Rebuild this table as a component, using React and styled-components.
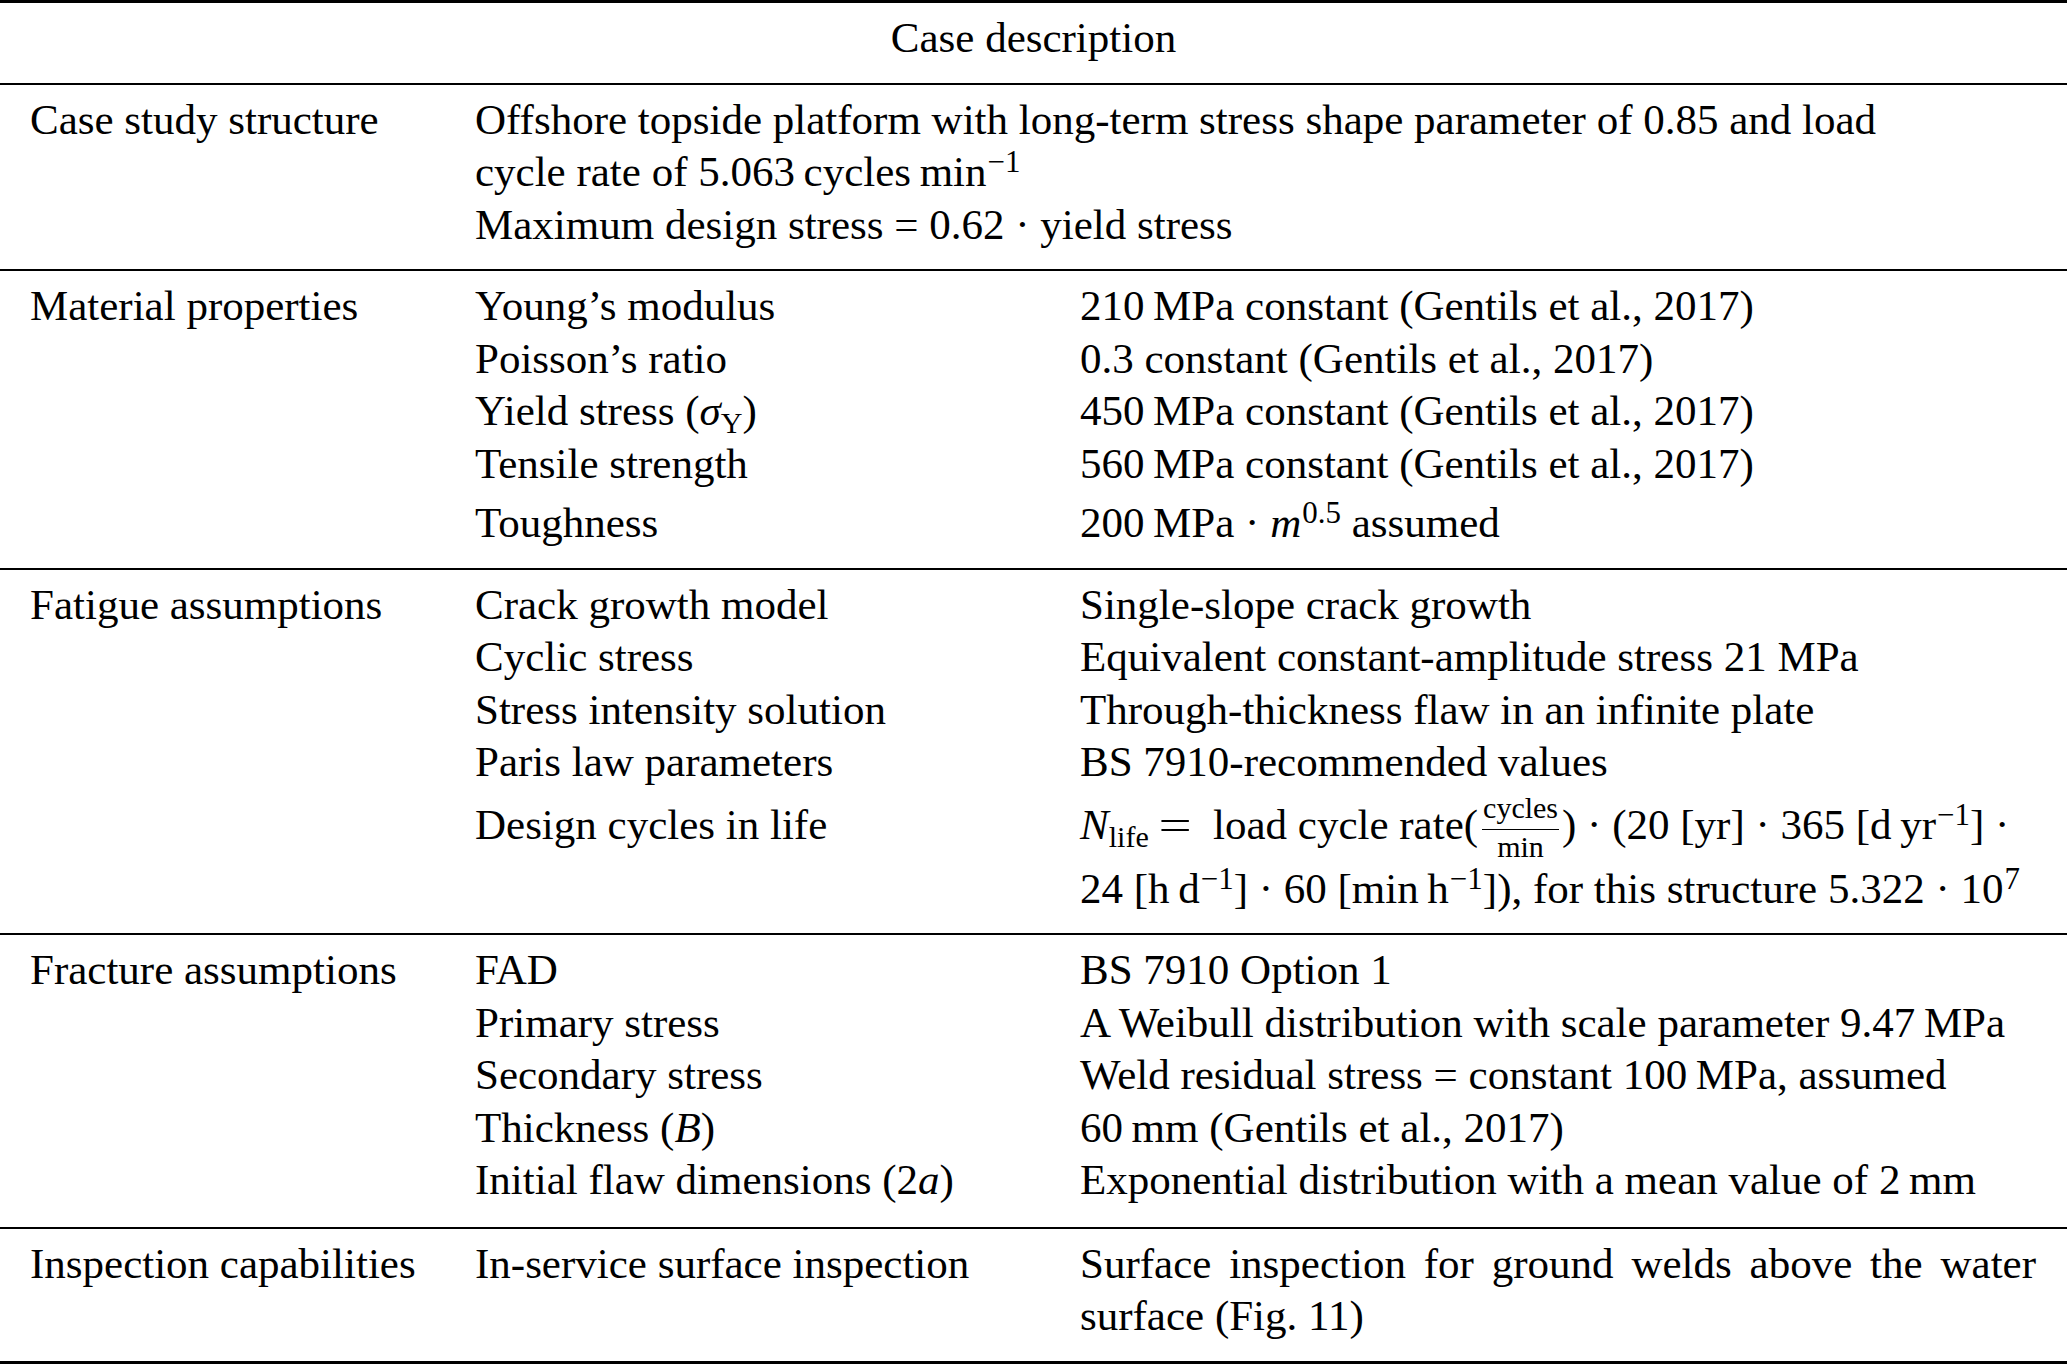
import React from "react";
import styled, { createGlobalStyle } from "styled-components";

const Global = createGlobalStyle`
  html, body {
    margin: 0;
    padding: 0;
    background: #ffffff;
    overflow: hidden;
  }
  body {
    font-family: "Liberation Serif", "Times New Roman", serif;
    color: #000000;
  }
`;

const Table = styled.div`
  width: 100%;
  box-sizing: border-box;
  border-top: 3px solid #000;
  border-bottom: 3px solid #000;
  font-size: 43px;
  line-height: 52.5px;
`;

const Header = styled.div`
  text-align: center;
  padding: 9px 0 18px;
  border-bottom: 2px solid #000;
`;

const Section = styled.section`
  display: flex;
  align-items: baseline;
  padding: 9px 31px ${(p) => p.$bottom || 18}px 30px;
  & + & {
    border-top: 2px solid #000;
  }
`;

const Label = styled.div`
  flex: 0 0 445px;
  white-space: nowrap;
`;

const Items = styled.div`
  flex: 1;
  min-width: 0;
  display: flex;
  flex-direction: column;
`;

const Item = styled.div`
  display: grid;
  grid-template-columns: 605px 1fr;
  align-items: baseline;
  padding-top: ${(p) => p.$extra || 0}px;
`;

const Term = styled.div`
  white-space: nowrap;
`;

const Value = styled.div`
  grid-column: ${(p) => (p.$full ? "1 / -1" : "auto")};
  min-width: 0;
`;

const Line = styled.div`
  white-space: nowrap;
`;

const Justified = styled.div`
  text-align: justify;
  text-align-last: justify;
`;

const I = styled.i`
  font-style: italic;
`;

const Sup = styled.sup`
  font-size: 0.72em;
  line-height: 0;
  vertical-align: 0.45em;
  margin-left: 1px;
`;

const Sub = styled.sub`
  font-size: 0.7em;
  line-height: 0;
  vertical-align: -0.27em;
`;

const Rel = styled.span`
  display: inline-block;
  transform: scaleX(1.37);
  margin: 0 26px 0 14px;
`;

const Frac = styled.span`
  display: inline-block;
  vertical-align: -18px;
  text-align: center;
  font-size: 30px;
  line-height: 30px;
  margin: 0 3px 0 4px;
`;

const Num = styled.span`
  display: block;
  padding: 4px 1px 6px;
  border-bottom: 1.5px solid #000;
`;

const Den = styled.span`
  display: block;
  padding-top: 2px;
  padding-bottom: 1px;
`;

const T = "\u2009";
const M = "\u2212";

export default function App() {
  return (
    <>
      <Global />
      <Table>
        <Header>Case description</Header>

        <Section>
          <Label>Case study structure</Label>
          <Items>
            <Item>
              <Value $full>
                <Line>
                  Offshore topside platform with long-term stress shape parameter of 0.85 and load
                </Line>
                <Line>
                  cycle rate of 5.063{T}cycles{T}min<Sup>{M}1</Sup>
                </Line>
                <Line>Maximum design stress = 0.62 · yield stress</Line>
              </Value>
            </Item>
          </Items>
        </Section>

        <Section>
          <Label>Material properties</Label>
          <Items>
            <Item>
              <Term>Young’s modulus</Term>
              <Value>210{T}MPa constant (Gentils et al., 2017)</Value>
            </Item>
            <Item>
              <Term>Poisson’s ratio</Term>
              <Value>0.3 constant (Gentils et al., 2017)</Value>
            </Item>
            <Item>
              <Term>
                Yield stress (<I>σ</I>
                <Sub>Y</Sub>)
              </Term>
              <Value>450{T}MPa constant (Gentils et al., 2017)</Value>
            </Item>
            <Item>
              <Term>Tensile strength</Term>
              <Value>560{T}MPa constant (Gentils et al., 2017)</Value>
            </Item>
            <Item $extra={7}>
              <Term>Toughness</Term>
              <Value>
                200{T}MPa · <I>m</I>
                <Sup>0.5</Sup> assumed
              </Value>
            </Item>
          </Items>
        </Section>

        <Section>
          <Label>Fatigue assumptions</Label>
          <Items>
            <Item>
              <Term>Crack growth model</Term>
              <Value>Single-slope crack growth</Value>
            </Item>
            <Item>
              <Term>Cyclic stress</Term>
              <Value>Equivalent constant-amplitude stress 21 MPa</Value>
            </Item>
            <Item>
              <Term>Stress intensity solution</Term>
              <Value>Through-thickness flaw in an infinite plate</Value>
            </Item>
            <Item>
              <Term>Paris law parameters</Term>
              <Value>BS 7910-recommended values</Value>
            </Item>
            <Item>
              <Term>Design cycles in life</Term>
              <Value>
                <Line>
                  <I>N</I>
                  <Sub>life</Sub>
                  <Rel>=</Rel>load cycle rate(
                  <Frac>
                    <Num>cycles</Num>
                    <Den>min</Den>
                  </Frac>
                  ) · (20 [yr] · 365 [d{T}yr<Sup>{M}1</Sup>] ·
                </Line>
                <Line>
                  24 [h{T}d<Sup>{M}1</Sup>] · 60 [min{T}h<Sup>{M}1</Sup>]), for this structure
                  5.322 · 10<Sup>7</Sup>
                </Line>
              </Value>
            </Item>
          </Items>
        </Section>

        <Section $bottom={20}>
          <Label>Fracture assumptions</Label>
          <Items>
            <Item>
              <Term>FAD</Term>
              <Value>BS 7910 Option 1</Value>
            </Item>
            <Item>
              <Term>Primary stress</Term>
              <Value>A Weibull distribution with scale parameter 9.47{T}MPa</Value>
            </Item>
            <Item>
              <Term>Secondary stress</Term>
              <Value>Weld residual stress = constant 100{T}MPa, assumed</Value>
            </Item>
            <Item>
              <Term>
                Thickness (<I>B</I>)
              </Term>
              <Value>60{T}mm (Gentils et al., 2017)</Value>
            </Item>
            <Item>
              <Term>
                Initial flaw dimensions (2<I>a</I>)
              </Term>
              <Value>Exponential distribution with a mean value of 2{T}mm</Value>
            </Item>
          </Items>
        </Section>

        <Section>
          <Label>Inspection capabilities</Label>
          <Items>
            <Item>
              <Term>In-service surface inspection</Term>
              <Value>
                <Justified>Surface inspection for ground welds above the water</Justified>
                <Line>surface (Fig. 11)</Line>
              </Value>
            </Item>
          </Items>
        </Section>
      </Table>
    </>
  );
}
